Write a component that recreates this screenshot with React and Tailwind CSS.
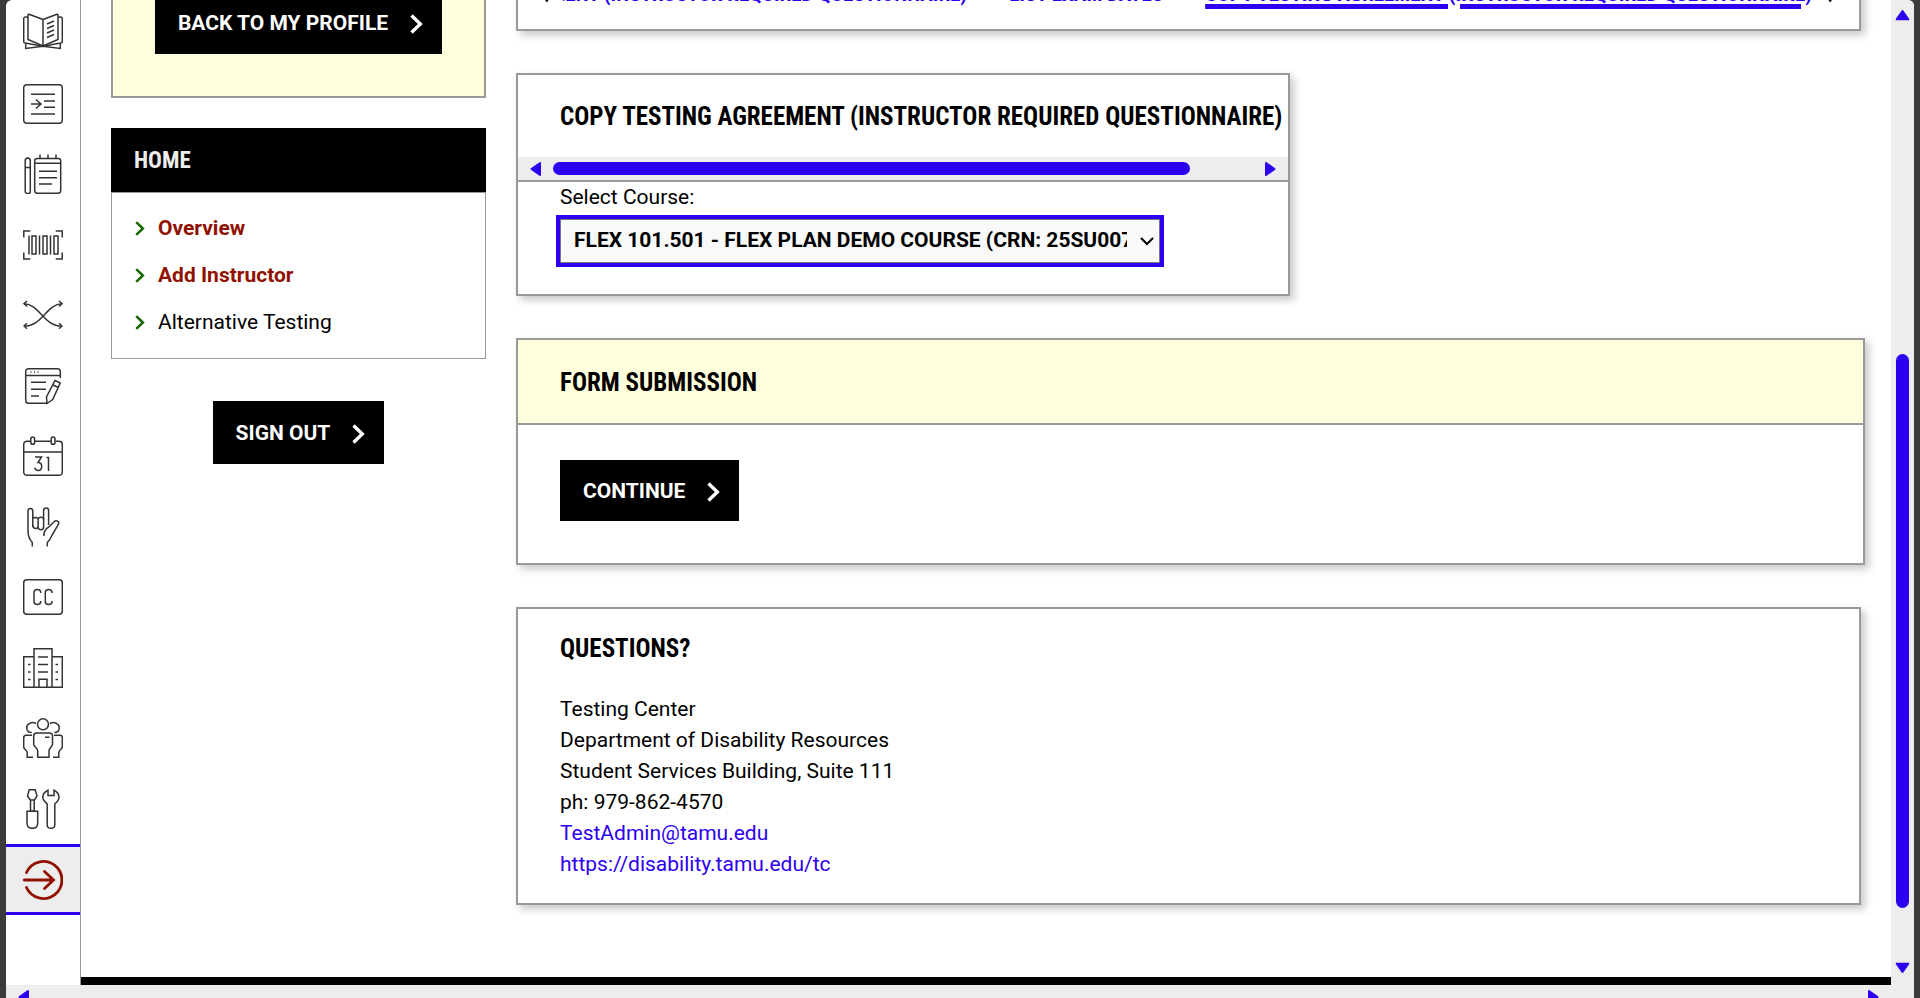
import { useState } from "react";

const ICONS = [
  {
    label: "Course catalog",
    art: (
      <>
        <path d="M20 6.500 34 1.200c.5-.2 1 .1 1 .7v24.600L20 33M20 6.500 6 1.200c-.5-.2-1 .1-1 .7V26.500L20 33M20 6.500V33" />
        <path d="M5 4H2.500C1.500 4 .7 4.700.7 5.500V28.500c0 1 .6 1.500 1.500 1.500L20 33.200M35 4h2.500c1 0 1.800.7 1.800 1.500V28.500c0 1-.6 1.500-1.500 1.500L20 33.200" />
        <path d="M2.700 30.500V35.500L20 33.300 37.300 35.500V30.500" />
        <path d="m24 11 7-3M24 15.500l7-3M24 20l7-3M24 24.500l7-3" />
      </>
    ),
  },
  {
    label: "Requests",
    art: (
      <>
        <rect x=".7" y=".7" width="38.600" height="38.600" rx="3" />
        <path d="M8 10.200h24M21 17h11M21 23.200h11M8 30h24M8 20h10M13 15.500l5 4.500-5 4.500" />
      </>
    ),
  },
  {
    label: "Notes",
    art: (
      <>
        <path d="M2.200 7c0-2 1-3 2.500-3s2.600 1 2.600 3v30c0 1.500-.7 2.400-1.600 2.400H4c-1 0-1.800-.9-1.800-2.400V7zM2.200 13.500h5.100" />
        <rect x="11.700" y="4.500" width="26" height="34.800" rx="2.500" />
        <path d="M11.700 9.200h26M17 .5V4.500M25 .5V4.500M33 .5V4.500M16 17.200h18M16 23.700h18M16 30h13" />
      </>
    ),
  },
  {
    label: "Barcodes",
    art: (
      <>
        <path d="M.8 12.500V6h6.500M32.700 6h6.500v6.500M39.200 27.500V34h-6.500M7.300 34H.8v-6.500" />
        <path d="M6 10.500v19M16.500 10.500v19M27.500 10.500v19" />
        <path d="M9 11h4v18H9zM20 11h4v18h-4zM31 11h4v18h-4z" />
      </>
    ),
  },
  {
    label: "Exchange",
    art: (
      <>
        <path d="M1 8.700C17 9 20 31 39 31M1 31C20 31 23 9 39 8.700" />
        <path d="M4 6 1 8.700 4 11.500M36 6l3 2.700-3 2.800M4 28.300 1 31l3 2.700M36 28.300l3 2.700-3 2.700" />
      </>
    ),
  },
  {
    label: "Forms",
    art: (
      <>
        <path d="M37.300 12V5.500c0-1.800-1-2.800-2.800-2.800h-29c-1.800 0-2.800 1-2.800 2.800v29c0 1.800 1 2.800 2.800 2.800h19M2.700 9.500h34.600" />
        <path d="M7.500 6h1M11 6h1M14.500 6h1M8 16.300h15M8 23.200h15M8 30h8" />
        <path d="m32 14.500 5.200 2.500-7.500 16.500-5.700 4-.5-6.500zM30 19l5.500 2.500" />
      </>
    ),
  },
  {
    label: "Calendar",
    art: (
      <>
        <path d="M7.500 5.200H4C2 5.200.7 6.500.7 8.500V36c0 2 1.300 3.300 3.300 3.300h32c2 0 3.300-1.300 3.300-3.300V8.500c0-2-1.300-3.300-3.300-3.300h-3.500M12 5.200h16M.7 16h38.600" />
        <rect x="7.800" y="1" width="3.800" height="7.300" rx="1.900" />
        <rect x="28.200" y="1" width="3.800" height="7.300" rx="1.900" />
        <path d="M12 21h6.500l-3.500 5.500c2.500 0 3.700 1.500 3.700 3.800 0 2.500-1.200 4.200-3.500 4.200-2 0-3.200-1-3.500-2.800M23.500 21.500h2v13.500" />
      </>
    ),
  },
  {
    label: "Interpreting",
    art: (
      <>
        <path d="M9.300 39.500v-4C6 32 5 29 5 24V4c0-3.500 4.800-3.500 4.800 0v16M9.800 11.500c1-1.300 4-1.300 5.300 0 1.500-1.300 4-1.300 5.500 0V3.500c0-3.500 5-3.500 5 0V18" />
        <path d="M15.100 11.500V20M20.600 11.500v10M9.800 18c0 4.500 5.300 4.500 5.300 1M15.100 20c0 3.500 5.500 3.500 5.500 0" />
        <path d="M20.800 29c0-6 2.700-7.500 5-9l5-5c2.500-2.500 6-.5 4.500 2.500l-6.500 11c-1 2.500-2 5-4.500 7v4" />
      </>
    ),
  },
  {
    label: "Captioning",
    art: (
      <>
        <rect x=".7" y="2.700" width="38.600" height="34.600" rx="3" />
        <path d="M17.700 16v-.5c0-4-6.700-4-6.700 0v9c0 4 6.700 4 6.700 0V24M29 16v-.5c0-4-6.700-4-6.700 0v9c0 4 6.700 4 6.700 0V24" />
      </>
    ),
  },
  {
    label: "Housing",
    art: (
      <>
        <path d="M11 39.300V.7h18v38.600M11 8.700H.7v30.600h38.600V8.700H29" />
        <path d="M15 9h10M15 16.500h10M15 24h10M16 39.300v-8h8v8M5 16.500h2.500M5 24h2.500M5 31.500h2.500M32.500 16.500H35M32.500 24H35M32.500 31.500H35" />
      </>
    ),
  },
  {
    label: "Groups",
    art: (
      <>
        <circle cx="20" cy="6.300" r="5.500" />
        <path d="M13 5.500C8.500 3 3.500 6 3.700 10c.2 3 2.300 4.500 5 4.500M27 5.500c4.500-2.500 9.500.5 9.300 4.500-.2 3-2.300 4.500-5 4.500" />
        <path d="M13.500 15h13c2 0 3 1 3 3v8.500c0 2-3.500 3.500-3.500 6.500v6.300H14.700V33c0-3-4-4.500-4-6.500V18c0-2 1-3 2.800-3zM22 19.200h4.500" />
        <path d="M9 17.300H3c-1.600 0-2.300.8-2.300 2.400V29c0 2 3.500 3 3.500 5.500v4.800H10M31 17.300h6c1.600 0 2.300.8 2.300 2.400V29c0 2-3.500 3-3.500 5.500v4.800H30" />
      </>
    ),
  },
  {
    label: "Tools",
    art: (
      <>
        <path d="M6.200.8h6l1.800 6-2.800 4.500v11H7.500v-11L4.500 7z" />
        <path d="M4 22.300h10.700V34c0 3.300-2 5.300-5.300 5.300S4 37.300 4 34zM7.500 11h4" />
        <path d="M25 1.200v5.300h6V1.200c3 1.300 5 4 5 7.300 0 2.500-1.800 4.300-4.200 6.500V36c0 2-1.500 3.300-3.800 3.300S24.200 38 24.200 36V15c-2.400-2.200-4.400-4-4.400-6.500C19.800 5.200 22 2.500 25 1.200z" />
      </>
    ),
  },
];

const TABS = [
  "Testing Agreement (Instructor Required Questionnaire)",
  "List Exam Dates",
  "Copy Testing Agreement (Instructor Required Questionnaire)",
];

function Chevron({ className }) {
  return (
    <svg
      viewBox="0 0 13 20"
      className={className}
      fill="none"
      stroke="currentColor"
      strokeWidth="3.400"
      aria-hidden="true"
    >
      <path d="m1.500 1.500 8.800 8.500-8.800 8.500" />
    </svg>
  );
}

function Arrow({ className }) {
  return (
    <svg
      viewBox="0 0 11 14"
      className={className}
      fill="currentColor"
      stroke="currentColor"
      strokeWidth="2"
      strokeLinejoin="round"
      aria-hidden="true"
    >
      <path d="M10 1v12L1.500 7z" />
    </svg>
  );
}

function ActionButton({ children, className = "h-[63px]" }) {
  return (
    <button
      type="button"
      className={`flex items-center gap-[22px] bg-black pt-0.5 pr-[19px] pl-[23px] font-bold text-white uppercase ${className}`}
    >
      {children}
      <Chevron className="h-5 w-[13px]" />
    </button>
  );
}

function Card({ children, className = "" }) {
  return (
    <section
      className={`border-2 border-[#999] bg-white shadow-[4px_4px_8px_rgba(0,0,0,0.22)] ${className}`}
    >
      {children}
    </section>
  );
}

function CardTitle({ children, className = "" }) {
  return (
    <h2
      className={`pl-[42px] font-['Roboto_Condensed',Roboto,sans-serif] text-[25px] leading-[34px] font-bold whitespace-nowrap uppercase ${className}`}
    >
      {children}
    </h2>
  );
}

function Rail() {
  return (
    <nav
      aria-label="Modules"
      className="flex w-[75px] shrink-0 flex-col border-r border-[#999] pb-[70px]"
    >
      <ul className="-mt-0.5 flex grow flex-col justify-between">
        {ICONS.map((icon) => (
          <li key={icon.label}>
            <a
              href="#"
              aria-label={icon.label}
              className="flex h-[70px] items-center justify-center text-[#333]"
            >
              <svg
                viewBox="0 0 40 40"
                className="size-10"
                fill="none"
                stroke="currentColor"
                strokeWidth="1.500"
              >
                {icon.art}
              </svg>
            </a>
          </li>
        ))}
        <li>
          <a
            href="#"
            aria-label="Sign out"
            className="flex h-[71px] items-center justify-center border-y-[3px] border-[#2d00f0] bg-[#ededed] text-[#911100]"
          >
            <svg
              viewBox="0 0 40 40"
              className="size-10"
              fill="none"
              stroke="currentColor"
              strokeWidth="2.800"
              strokeLinecap="round"
            >
              <path d="M3.500 12.500a18.500 18.500 0 1 1 0 15" />
              <path d="M1.200 20H30M21.500 11.500 30.500 20l-9 8.500" />
            </svg>
          </a>
        </li>
      </ul>
    </nav>
  );
}

function SideMenu() {
  const links = [
    { text: "Overview", strong: true },
    { text: "Add Instructor", strong: true },
    { text: "Alternative Testing", strong: false },
  ];

  return (
    <aside className="w-[375px] shrink-0">
      <div className="-mt-[60px] flex justify-center border-2 border-[#999] bg-[#ffffdd] pt-[49px] pb-[42px]">
        <ActionButton>Back to my profile</ActionButton>
      </div>

      <nav aria-label="Home" className="mt-[30px]">
        <h2 className="bg-black px-[23px] pt-0.5 font-['Roboto_Condensed',Roboto,sans-serif] text-[23px] leading-[62px] font-bold text-[#ededed] uppercase">
          Home
        </h2>
        <ul className="border border-[#999] py-3">
          {links.map((link) => (
            <li key={link.text} className="flex h-[47px] items-center gap-[13px] pl-[23px]">
              <Chevron className="h-[15px] w-2.5 text-[#1b6600]" />
              <a
                href="#"
                className={link.strong ? "font-bold text-[#911100]" : "text-black"}
              >
                {link.text}
              </a>
            </li>
          ))}
        </ul>
      </nav>

      <div className="mt-[42px] flex justify-center">
        <ActionButton>Sign out</ActionButton>
      </div>
    </aside>
  );
}

function TabBar() {
  return (
    <Card className="-mt-[60px] mr-1 flex items-center justify-between px-[23px] pt-[36px] pb-[19px]">
      <button type="button" aria-label="Previous tab">
        <svg viewBox="0 0 8 18" className="h-[18px] w-2" fill="none" stroke="currentColor" strokeWidth="2.400" aria-hidden="true">
          <path d="M6.500 1.500 1.500 9l5 7.500" />
        </svg>
      </button>
      <div className="mr-4 ml-3.5 flex min-w-0 grow justify-end gap-[42px] overflow-hidden font-['Roboto_Condensed',Roboto,sans-serif] leading-8 font-bold whitespace-nowrap text-[#2d00f0] uppercase">
        {TABS.map((tab, index) => (
          <a
            key={tab}
            href="#"
            className={
              index === 2 ? "underline decoration-[5px] underline-offset-[3px]" : ""
            }
          >
            {tab}
          </a>
        ))}
      </div>
      <button type="button" aria-label="Next tab">
        <svg viewBox="0 0 8 18" className="h-[18px] w-2" fill="none" stroke="currentColor" strokeWidth="2.400" aria-hidden="true">
          <path d="m1.500 1.500 5 7.500-5 7.500" />
        </svg>
      </button>
    </Card>
  );
}

function CourseCard() {
  const [course, setCourse] = useState("25SU007");

  return (
    <Card className="mt-[42px] w-[774px] max-w-full">
      <CardTitle className="overflow-hidden pt-[25px] pb-[23px]">
        Copy Testing Agreement (Instructor Required Questionnaire)
      </CardTitle>
      <div className="flex h-[23px] items-center gap-3 bg-[#ededed] px-[12px] text-[#2d00f0]">
        <Arrow className="h-3.5 w-[11px] shrink-0" />
        <div className="grow">
          <div className="h-[13px] w-[91%] rounded-full bg-[#2d00f0]" />
        </div>
        <Arrow className="h-3.5 w-[11px] shrink-0 rotate-180" />
      </div>
      <div className="border-t-2 border-[#999] px-[42px] pb-[31px]">
        <label htmlFor="course" className="block leading-[31px]">
          Select Course:
        </label>
        <div className="relative mt-1.5 w-[600px] max-w-full">
          <select
            id="course"
            value={course}
            onChange={(event) => setCourse(event.target.value)}
            className="h-11 w-full appearance-none border border-[#767676] bg-[#f9f9f9] pr-[32px] pl-[13px] font-bold outline-4 outline-[#2d00f0]"
          >
            <option value="25SU007">
              FLEX 101.501 - FLEX PLAN DEMO COURSE (CRN: 25SU007)
            </option>
          </select>
          <svg
            viewBox="0 0 14 9"
            className="pointer-events-none absolute top-[18px] right-1.5 h-[9px] w-3.5"
            fill="none"
            stroke="currentColor"
            strokeWidth="2"
            aria-hidden="true"
          >
            <path d="m1 1 6 6 6-6" />
          </svg>
        </div>
      </div>
    </Card>
  );
}

function Content() {
  return (
    <main className="min-w-0 grow">
      <TabBar />
      <CourseCard />

      <Card className="mt-[42px]">
        <CardTitle className="border-b-2 border-[#999] bg-[#ffffdd] pt-[26px] pb-[23px]">
          Form Submission
        </CardTitle>
        <div className="px-[42px] pt-[35px] pb-[42px]">
          <ActionButton className="h-[61px]">Continue</ActionButton>
        </div>
      </Card>

      <Card className="mt-[42px] mr-1 pb-[23px]">
        <CardTitle className="pt-[23px]">Questions?</CardTitle>
        <address className="mt-7 px-[42px] leading-[31px] not-italic">
          <p>Testing Center</p>
          <p>Department of Disability Resources</p>
          <p>Student Services Building, Suite 111</p>
          <p>ph: 979-862-4570</p>
          <a href="mailto:TestAdmin@tamu.edu" className="block text-[#2d00f0]">
            TestAdmin@tamu.edu
          </a>
          <a href="https://disability.tamu.edu/tc" className="block text-[#2d00f0]">
            https://disability.tamu.edu/tc
          </a>
        </address>
      </Card>
    </main>
  );
}

export default function App() {
  return (
    <div className="h-screen overflow-hidden bg-[#3b3b3b] px-1.5 font-[Roboto,sans-serif] text-[21px] text-black">
      <div className="flex h-full flex-col overflow-hidden rounded-t-md bg-white">
        <div className="flex min-h-0 grow">
          <Rail />
          <div className="flex min-w-0 grow flex-col">
            <div className="flex min-h-0 grow gap-[30px] pr-[26px] pl-[30px]">
              <SideMenu />
              <Content />
            </div>
            <div className="h-2 shrink-0 bg-black" />
          </div>
          <div className="flex w-[23px] shrink-0 flex-col items-center bg-[#ededed] pt-2 pb-2.5 text-[#2d00f0]">
            <Arrow className="h-3.5 w-[11px] rotate-90" />
            <div className="grow-[332]" />
            <div className="w-[13px] grow-[554] rounded-full bg-[#2d00f0]" />
            <div className="grow-[53]" />
            <Arrow className="h-3.5 w-[11px] -rotate-90" />
          </div>
        </div>
        <div className="flex h-[13px] shrink-0 justify-between bg-[#ededed] pt-[5px] pr-[35px] pl-3 text-[#2d00f0]">
          <Arrow className="h-3.5 w-[11px]" />
          <Arrow className="h-3.5 w-[11px] rotate-180" />
        </div>
      </div>
    </div>
  );
}
